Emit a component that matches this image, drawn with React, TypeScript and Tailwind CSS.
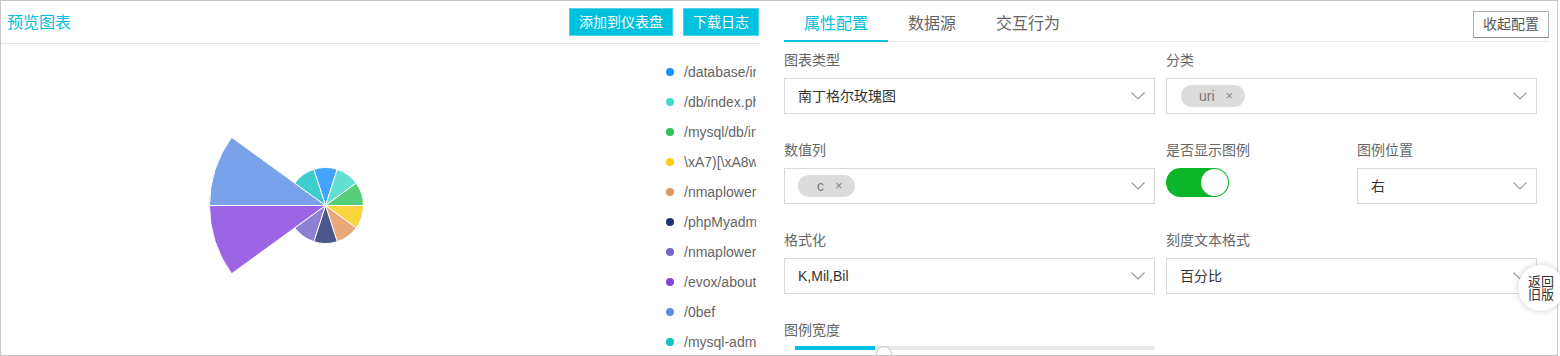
import React from 'react';

const slices = [
  { name: '/database/index.php', color: '#1890FF', r: 38 },
  { name: '/db/index.php', color: '#41D9C7', r: 38 },
  { name: '/mysql/db/index.php', color: '#2FC25B', r: 38 },
  { name: '\\xA7)[\\xA8w', color: '#FACC14', r: 38 },
  { name: '/nmaplowercheck', color: '#E6965C', r: 38 },
  { name: '/phpMyadmin', color: '#223273', r: 38 },
  { name: '/nmaplowercase', color: '#7564CC', r: 38 },
  { name: '/evox/about', color: '#8543E0', r: 116 },
  { name: '/0bef', color: '#5C8EE6', r: 116 },
  { name: '/mysql-admin', color: '#13C2C2', r: 38 },
];

const CX = 324.5;
const CY = 161.5;

// point on the circle, math angle in degrees (y up)
const pt = (deg: number, r: number) => {
  const a = (deg * Math.PI) / 180;
  return `${(CX + r * Math.cos(a)).toFixed(2)} ${(CY - r * Math.sin(a)).toFixed(2)}`;
};

const RoseChart = () => (
  <svg width={664} height={311} viewBox="0 0 664 311" className="shrink-0">
    {slices.map((s, i) => {
      const start = 108 - 36 * i;
      const end = start - 36;
      return (
        <path
          key={s.name}
          d={`M ${CX} ${CY} L ${pt(start, s.r)} A ${s.r} ${s.r} 0 0 1 ${pt(end, s.r)} Z`}
          fill={s.color}
          fillOpacity={0.82}
          stroke="#fff"
          strokeWidth={1}
        />
      );
    })}
  </svg>
);

const Chevron = () => (
  <svg width={14} height={8} viewBox="0 0 14 8" className="ml-auto shrink-0">
    <path d="M0.5 0.5 L7 7 L13.5 0.5" fill="none" stroke="#9a9a9a" strokeWidth={1.1} />
  </svg>
);

const Chip = ({ label, left }: { label: string; left: string }) => (
  <span className={`flex items-center h-[22px] rounded-full bg-[#dcdcdc] pr-[12px] text-[14px] text-[#777] ${left}`}>
    <span>{label}</span>
    <span className="ml-[11px] text-[13px] text-[#888]">×</span>
  </span>
);

const Select = ({ children }: { children: React.ReactNode }) => (
  <div className="h-[36px] border border-[#d9d9d9] flex items-center pl-[13px] pr-[9px] text-[14px] text-[#333]">
    {children}
    <Chevron />
  </div>
);

const Field = ({
  label,
  span,
  children,
}: {
  label: string;
  span?: boolean;
  children: React.ReactNode;
}) => (
  <div className={span ? 'col-span-2' : ''}>
    <div className="h-[20px] leading-[20px] text-[14px] text-[#666] mb-[8px]">{label}</div>
    {children}
  </div>
);

export default function App() {
  return (
    <div className="relative w-[1558px] h-[356px] border border-[#c6c6c6] bg-white flex font-['Liberation_Sans','Noto_Sans_CJK_SC',sans-serif]">
      {/* preview panel */}
      <div className="w-[760px] shrink-0 flex flex-col overflow-hidden">
        <div className="h-[43px] border-b border-[#e6e6e6] flex items-center pl-[6px] pr-[2px]">
          <span className="text-[16px] text-[#00c1de] mt-[2px]">预览图表</span>
          <button className="ml-auto h-[28px] px-[9px] bg-[#00c1de] border border-[#4ed3e8] text-white text-[14px]">
            添加到仪表盘
          </button>
          <button className="ml-[10px] h-[28px] px-[9px] bg-[#00c1de] border border-[#4ed3e8] text-white text-[14px]">
            下载日志
          </button>
        </div>
        <div className="flex flex-1 overflow-hidden">
          <RoseChart />
          <div className="w-[91px] overflow-hidden pt-[13px]">
            {slices.map((s) => (
              <div key={s.name} className="h-[30px] flex items-center whitespace-nowrap">
                <span
                  className="w-[8px] h-[8px] rounded-full ml-[1px] shrink-0"
                  style={{ backgroundColor: s.color }}
                />
                <span className="ml-[10px] text-[14px] text-[#666]">{s.name}</span>
              </div>
            ))}
          </div>
        </div>
      </div>

      {/* config panel */}
      <div className="flex-1 pl-[23px] pr-[8px] overflow-hidden">
        <div className="h-[41px] border-b border-[#e8e8e8] flex items-start">
          <div className="h-[41px] px-5 pt-[12px] leading-[22px] text-[16px] text-[#00c1de] border-b-2 border-[#00c1de]">
            属性配置
          </div>
          <div className="h-[41px] px-5 pt-[12px] leading-[22px] text-[16px] text-[#666]">数据源</div>
          <div className="h-[41px] px-5 pt-[12px] leading-[22px] text-[16px] text-[#666]">交互行为</div>
          <button className="ml-auto mt-[10px] h-[27px] px-[9px] border border-[#b0b0b0] border-b-[#8c8c8c] text-[14px] text-[#555] bg-white">
            收起配置
          </button>
        </div>

        <div className="pt-[8px] grid grid-cols-[repeat(4,180px)] gap-x-[11px] gap-y-[26px]">
          <Field label="图表类型" span>
            <Select>南丁格尔玫瑰图</Select>
          </Field>
          <Field label="分类" span>
            <Select>
              <Chip label="uri" left="pl-[18px] ml-[1px]" />
            </Select>
          </Field>

          <Field label="数值列" span>
            <Select>
              <Chip label="c" left="pl-[19px]" />
            </Select>
          </Field>
          <Field label="是否显示图例">
            <div className="w-[63px] h-[29px] rounded-full bg-[#0cb52a] flex items-center justify-end pr-[1px]">
              <span className="w-[27px] h-[27px] rounded-full bg-white" />
            </div>
          </Field>
          <Field label="图例位置">
            <Select>右</Select>
          </Field>

          <Field label="格式化" span>
            <Select>K,Mil,Bil</Select>
          </Field>
          <Field label="刻度文本格式" span>
            <Select>百分比</Select>
          </Field>

          <div className="col-span-2">
            <div className="h-[20px] leading-[20px] text-[14px] text-[#666]">图例宽度</div>
            <div className="relative mt-[6px] h-[16px] ml-[11px]">
              <div className="mt-[6px] h-[4px] bg-[#e9e9e9] flex">
                <div className="w-[80px] h-full bg-[#00c1de]" />
              </div>
              <span className="absolute left-[81px] top-0 w-[16px] h-[16px] rounded-full bg-white border border-[#c8c8c8]" />
            </div>
          </div>
        </div>
      </div>

      {/* floating "back to old version" badge */}
      <div className="absolute left-[1517px] top-[264px] w-[46px] h-[46px] rounded-full bg-white shadow-[0_0_6px_rgba(0,0,0,0.2)] flex flex-col items-start justify-center pl-[10px] text-[13px] leading-[13px] text-[#333]">
        <span className="whitespace-nowrap">返回</span>
        <span className="whitespace-nowrap">旧版</span>
      </div>
    </div>
  );
}
